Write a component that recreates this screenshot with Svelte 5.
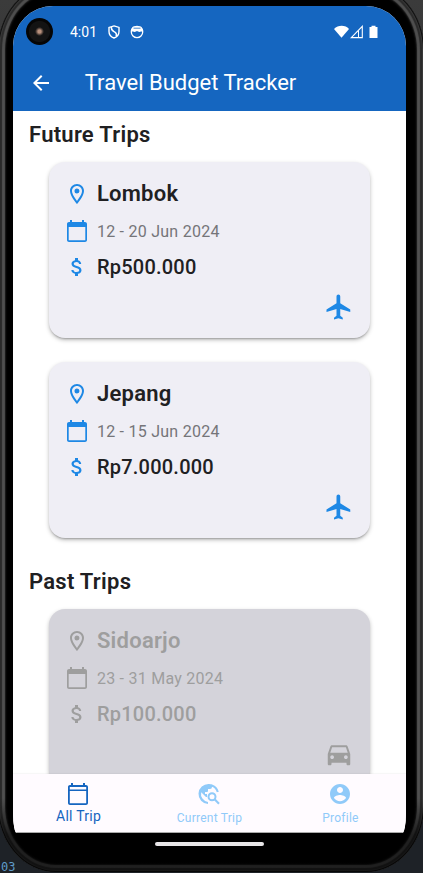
<script>
  const trips = [
    { name: 'Lombok', date: '12 - 20 Jun 2024', cost: 'Rp500.000', past: false },
    { name: 'Jepang', date: '12 - 15 Jun 2024', cost: 'Rp7.000.000', past: false },
    { name: 'Sidoarjo', date: '23 - 31 May 2024', cost: 'Rp100.000', past: true }
  ];
  const future = trips.filter((t) => !t.past);
  const past = trips.filter((t) => t.past);

  const icons = {
    back: 'M20 11H7.83l5.59-5.59L12 4l-8 8 8 8 1.41-1.41L7.83 13H20v-2z',
    pin: 'M12 2C8.13 2 5 5.13 5 9c0 5.25 7 13 7 13s7-7.75 7-13c0-3.87-3.13-7-7-7zM7 9c0-2.76 2.24-5 5-5s5 2.24 5 5c0 2.88-2.88 7.19-5 9.88C9.92 16.21 7 11.85 7 9zm5-2.5a2.5 2.5 0 1 0 0 5 2.5 2.5 0 0 0 0-5z',
    calendar: 'M20 3h-1V1h-2v2H7V1H5v2H4c-1.1 0-2 .9-2 2v16c0 1.1.9 2 2 2h16c1.1 0 2-.9 2-2V5c0-1.1-.9-2-2-2zm.3 18.3H3.7V8h16.6v13.3z',
    calendarLine: 'M20 3h-1V1h-2v2H7V1H5v2H4c-1.1 0-2 .9-2 2v16c0 1.1.9 2 2 2h16c1.1 0 2-.9 2-2V5c0-1.1-.9-2-2-2zm.2 2v2.4H3.8V5h16.4zM3.8 21.200V9h16.400v12.200H3.800z',
    dollar: 'M11.8 10.9c-2.27-.59-3-1.2-3-2.15 0-1.09 1.01-1.85 2.7-1.85 1.78 0 2.44.85 2.5 2.1h2.21c-.07-1.72-1.12-3.3-3.21-3.81V3h-3v2.16c-1.94.42-3.5 1.68-3.5 3.61 0 2.31 1.91 3.46 4.7 4.13 2.5.6 3 1.48 3 2.41 0 .69-.49 1.79-2.7 1.79-2.06 0-2.87-.92-2.98-2.1h-2.2c.12 2.19 1.76 3.42 3.68 3.83V21h3v-2.15c1.95-.37 3.5-1.5 3.5-3.55 0-2.84-2.43-3.81-4.7-4.4z',
    plane: 'M21 16v-2l-8-5V3.500c0-.83-.67-1.500-1.500-1.500S10 2.670 10 3.500V9l-8 5v2l8-2.500V19l-2 1.500V22l3.500-1 3.500 1v-1.500L13 19v-5.500l8 2.500z',
    car: 'M18.92 6.01C18.72 5.42 18.16 5 17.5 5h-11c-.66 0-1.21.42-1.42 1.01L3 12v8c0 .55.45 1 1 1h1c.55 0 1-.45 1-1v-1h12v1c0 .55.45 1 1 1h1c.55 0 1-.45 1-1v-8l-2.08-5.99zM6.5 16c-.83 0-1.5-.67-1.5-1.5S5.67 13 6.5 13s1.5.67 1.5 1.5S7.33 16 6.5 16zm11 0c-.83 0-1.5-.67-1.5-1.5s.67-1.5 1.5-1.5 1.5.67 1.5 1.5-.67 1.5-1.5 1.5zM5 11l1.5-4.5h11L19 11H5z',
    person: 'M12 2C6.48 2 2 6.48 2 12s4.48 10 10 10 10-4.48 10-10S17.52 2 12 2zm0 3c1.66 0 3 1.34 3 3s-1.34 3-3 3-3-1.34-3-3 1.34-3 3-3zm0 14.2c-2.5 0-4.71-1.28-6-3.22.03-1.99 4-3.08 6-3.08 1.99 0 5.97 1.09 6 3.08-1.29 1.94-3.5 3.22-6 3.22z'
  };
</script>

{#snippet icon(path, size)}
  <svg width={size} height={size} viewBox="0 0 24 24" fill="currentColor"><path d={path} /></svg>
{/snippet}

{#snippet card(trip)}
  <article class="card" class:past={trip.past}>
    <div class="row name"><span class="ic">{@render icon(icons.pin, 24)}</span><h3>{trip.name}</h3></div>
    <div class="row date"><span class="ic">{@render icon(icons.calendar, 24)}</span><span class="label">{trip.date}</span></div>
    <div class="row cost"><span class="ic">{@render icon(icons.dollar, 24)}</span><span class="label">{trip.cost}</span></div>
    <div class="mode">{@render icon(trip.past ? icons.car : icons.plane, 30)}</div>
  </article>
{/snippet}

<div class="desktop">
  <span class="behind">03</span>
  <div class="phone">
    <div class="screen">
      <header>
        <div class="status">
          <time>4:01</time>
          <svg class="shield" width="12" height="14" viewBox="0 0 12 14" fill="none" stroke="#fff" stroke-width="1.4">
            <path d="M6 .9 11 2.4V6.5C11 9.5 9 12 6 13 3 12 1 9.5 1 6.5V2.4zM3.5 2.2c-.5 2.3.5 3.5 2.5 4.5s3 2.5 2 4.5" />
          </svg>
          <svg class="face" width="14" height="14" viewBox="0 0 14 14">
            <circle cx="7" cy="7" r="5.7" fill="none" stroke="#fff" stroke-width="1.3" />
            <path d="M1.2 4 3 1.5h8L12.8 4v2.5H11L9.5 7 8 6.6 7 6 6 6.6 4.5 7 3 6.5H1.2z" fill="#fff" />
            <path d="M3.5 3.2h7" stroke="#1566c0" stroke-width=".8" />
          </svg>
          <span class="grow"></span>
          <svg width="45" height="14" viewBox="0 0 45 14">
            <path d="M0 4C4-.2 11.5-.2 15 4L7.5 12.8z" fill="#fff" />
            <path d="M17.3 12.6 28.3 1.3V12.6z" fill="none" stroke="#fff" stroke-width="1.1" />
            <path d="M24.5 5.5V12.6" stroke="#fff" stroke-width="1" />
            <path d="M35.5 2h2V.7h4V2h2v11h-8z" fill="#fff" />
          </svg>
        </div>
        <div class="bar">
          {@render icon(icons.back, 24)}
          <h1>Travel Budget Tracker</h1>
        </div>
      </header>
      <main>
        <h2>Future Trips</h2>
        {#each future as trip}{@render card(trip)}{/each}
        <h2 class="second">Past Trips</h2>
        {#each past as trip}{@render card(trip)}{/each}
      </main>
      <nav>
        <div class="tab active">{@render icon(icons.calendarLine, 24)}<span>All Trip</span></div>
        <div class="tab">
          <svg width="24" height="24" viewBox="0 0 24 24" fill="none" stroke="currentColor">
            <path d="M11 22A10 10 0 0 1 12 2c1.2 0 2.3.2 3.3.5L15 5a2 2 0 0 1-2 2h-2v2a1 1 0 0 1-1 1H8v2h2v3H9l-4.8-4.8A8 8 0 0 0 11 19.9z" fill="currentColor" stroke="none" />
            <path d="M14.5 3.4c3.2.9 5.4 3.3 6.3 6.6" stroke-width="2.1" />
            <circle cx="15" cy="14.7" r="3.5" stroke-width="2" />
            <path d="m17.6 17.3 4.4 4.4" stroke-width="2.1" />
          </svg>
          <span>Current Trip</span>
        </div>
        <div class="tab">{@render icon(icons.person, 24)}<span>Profile</span></div>
      </nav>
    </div>
    <div class="home"></div>
  </div>
  <div class="camera"></div>
</div>

<style>
  :global(body) { background: #2b2c30; }
  .desktop {
    position: relative;
    width: 423px;
    height: 873px;
    overflow: hidden;
    background: linear-gradient(#3b3b3b, #1e2227 60%);
    font-family: Roboto, sans-serif;
  }
  .behind {
    position: absolute;
    left: 1px;
    bottom: 0;
    font: 12px/12px "DejaVu Sans Mono", monospace;
    color: #5f9cc9;
  }
  .phone {
    box-sizing: border-box;
    position: relative;
    width: 426px;
    height: 888px;
    margin: -16px 0 0 -2px;
    padding: 22px 15px 0;
    border-radius: 58px / 66px;
    background: #000;
    box-shadow: inset 0 0 0 1px #111, inset 0 0 1px 2px #3a3a3a, inset 0 0 1px 4px #2a2a2a, inset 0 0 1px 7px #505050, inset 0 0 2px 8px #1a1a1a;
  }
  .phone::after {
    content: "";
    position: absolute;
    inset: auto 0 0;
    height: 74px;
    border-radius: 0 0 58px 58px / 0 0 66px 66px;
    background: linear-gradient(transparent, rgba(0, 0, 0, .6) 50%);
  }
  .screen {
    position: relative;
    z-index: 1;
    display: flex;
    flex-direction: column;
    width: 393px;
    height: 827px;
    overflow: hidden;
    border-radius: 40px 40px 4px 4px / 40px 40px 20px 20px;
    background: #fff;
  }
  header {
    flex: none;
    box-sizing: border-box;
    height: 105px;
    background: #1566c0;
    color: #fff;
  }
  .status {
    display: flex;
    align-items: center;
    box-sizing: border-box;
    height: 51px;
    padding: 0 27px 0 57px;
  }
  time { width: 38px; font-size: 14px; }
  .face { margin-left: 10px; }
  .grow { flex: 1; }
  .bar {
    display: flex;
    align-items: center;
    height: 51px;
    padding-left: 15.5px;
  }
  h1 { margin: 0 0 0 32.3px; font-size: 22px; font-weight: 400; line-height: 28px; white-space: nowrap; }
  main { flex: 1; min-height: 0; overflow: hidden; }
  h2 {
    margin: 10px 16px 13px;
    font-size: 22px;
    line-height: 28px;
    font-weight: 600;
    letter-spacing: .27px;
    color: #202022;
  }
  h2.second { margin-top: 30px; }
  .card {
    box-sizing: border-box;
    width: 321px;
    height: 176px;
    margin: 0 0 24px 36px;
    padding: 16px 16px 0;
    border-radius: 16px;
    background: #efeef5;
    box-shadow: 0 2px 2px -1px rgba(0, 0, 0, .22), 0 2px 4px rgba(0, 0, 0, .25);
    color: #202022;
  }
  .card.past { background: #d4d3da; color: #9e9e9e; }
  .row { display: flex; align-items: center; }
  .ic { display: flex; justify-content: center; width: 24px; margin: 0 8.3px 0 -.4px; color: #1e88e5; }
  .past .ic, .past .mode { color: #9e9e9e; }
  .name { height: 32px; }
  .date { height: 42px; }
  .cost { height: 29px; }
  h3 { margin: 0; font-size: 22px; line-height: 28px; font-weight: 600; letter-spacing: .25px; }
  .date .label { font-size: 16px; letter-spacing: .25px; color: #757579; }
  .past .date .label { color: #9e9e9e; }
  .cost .label { font-size: 20px; font-weight: 500; letter-spacing: .23px; }
  .mode { display: flex; justify-content: flex-end; margin-top: 11px; padding-right: .4px; color: #1e88e5; }
  nav {
    flex: none;
    display: flex;
    height: 58px;
    background: #fffbff;
    color: #90caf9;
    box-shadow: 0 -1px 1px rgba(0, 0, 0, .03);
    border-bottom: 1px solid #aaa;
  }
  .tab {
    flex: 1;
    display: flex;
    flex-direction: column;
    align-items: center;
    padding-top: 7.5px;
    font-size: 12px;
    line-height: 16px;
    letter-spacing: .25px;
  }
  .tab svg { margin-left: -1px; }
  .tab span { margin-top: 4px; white-space: nowrap; }
  .tab.active { color: #1565c0; font-size: 14px; letter-spacing: .25px; }
  .tab.active span { margin-top: 2.5px; }
  .home {
    position: relative;
    z-index: 1;
    width: 109px;
    height: 4px;
    margin: 9px 0 0 142px;
    border-radius: 2px;
    background: #e8e6e8;
  }
  .camera {
    position: absolute;
    z-index: 2;
    left: 26px;
    top: 18px;
    width: 27px;
    height: 27px;
    border-radius: 50%;
    background: radial-gradient(circle, #b8907c 0 1.5px, #403530 3.5px, #131313 4.5px 10px, #050505 11px);
  }
</style>
